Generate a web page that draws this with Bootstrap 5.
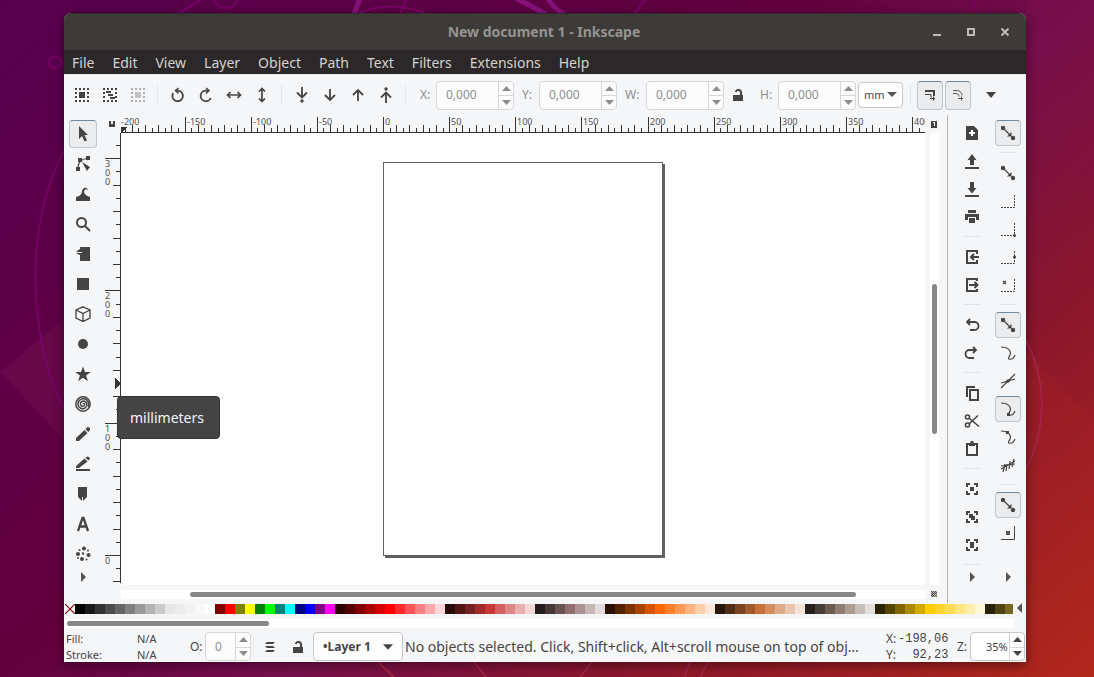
<!DOCTYPE html>
<html lang="en">
<head>
<meta charset="utf-8">
<meta name="viewport" content="width=device-width, initial-scale=1">
<title>New document 1 - Inkscape</title>
<link href="https://cdn.jsdelivr.net/npm/bootstrap@5.3.0/dist/css/bootstrap.min.css" rel="stylesheet">
<style>
:root{--ink:#444;--panel:#f5f6f8;--line:#d5d7da;--dim:#8b8e90}
body{font-family:"Noto Sans",sans-serif;font-size:14px;line-height:20px;color:var(--ink);min-height:100vh;padding:13px 68px 15px 64px;
 background:linear-gradient(140deg,#58004f 0%,#62003e 42%,#750f4b 57%,#8a162c 75%,#b3281a 100%)}
.wallpaper{z-index:-1}
svg{display:block;flex:none}
.app{background:var(--panel);border-radius:7px 7px 0 0;box-shadow:0 3px 12px rgba(0,0,0,.45);min-width:0}
.titlebar{height:37px;background:#3d3b38;border-radius:7px 7px 0 0;border-top:1px solid #2e2c2a;color:#95938f;display:grid;grid-template-columns:112px 1fr 114px}
.titlebar h1{font-size:14px;line-height:20px}
.wm{gap:18px;padding-right:13px}
.wm button,.plain{border:0;background:none;padding:0;color:inherit;display:flex;align-items:center;justify-content:center}
.wm button{width:16px;height:16px;color:#bdbbb6}
.menus{height:24px;background:#2c2829;padding:2px 8px 0;gap:18px}
.menus a{color:#d5d2cd;text-decoration:none}
.tools{height:41px;padding:0 8px 0 4px;border-top:1px solid #e6e7e9}
.ib{width:28px;height:28px}
.vr-soft{width:1px;height:20px;background:#e6e7e9;margin:0 6px 0 5px}
.status .vr-soft{margin:0 2px}
.hr-soft{width:16px;height:1px;background:#e3e4e6;margin:5px 6px 6px}
.pressed{border:1px solid #c3c6ca !important;border-top-color:#76889b !important;background:#ebecee !important;border-radius:4px}
.spin{width:78px;height:29px;border:1px solid var(--line);border-radius:4px;background:#fcfcfc;overflow:hidden}
.spin input{border:0;background:none;min-width:0;flex:1 1 0;padding:0 0 0 9px;font-size:12px;color:var(--dim);outline:0}
.spin .steps{width:15px;border-left:1px solid var(--line)}
.spin .steps button{height:50%;color:var(--dim)}
.spin .steps button+button{border-top:1px solid var(--line)}
.lab{font-size:12px;color:var(--dim)}
.unit{appearance:none;width:45px;height:26px;border:1px solid #c3c6ca;border-radius:4px;font-size:11px;line-height:16px;padding:0 0 0 5px;margin:0 2px;color:var(--ink);
 background:#fff url("data:image/svg+xml,%3Csvg xmlns='http://www.w3.org/2000/svg' width='10' height='6'%3E%3Cpath d='M0 0h10L5 5z' fill='%23555'/%3E%3C/svg%3E") no-repeat right 5px center}
.togg{width:26px;height:29px;margin-right:2px}
.toolbox{width:39px;padding:5px 5px 0;gap:2px}
.toolbox .more{width:28px;height:14px}
.sheetgrid{display:grid;grid-template-columns:18px minmax(0,1fr) 22px;grid-template-rows:18px minmax(452px,1fr) 18px}
.hr-ruler,.vr-ruler{overflow:hidden;position:relative}
.hr-ruler svg{width:100%;height:18px}
.vr-ruler svg{width:18px;height:100%;position:absolute;inset:0}
.sheetgrid text{font-size:9px;fill:#505050}
.canvas{background:#fff}
.paper{width:280px;height:394px;border:1px solid #606060;background:#fff;box-shadow:2px 2px 0 #606060}
.trough{background:#fff}
.vtrough{width:9px;margin-left:5px;padding:151px 2px 0}
.vtrough div{width:5px;height:150px;border-radius:3px;background:#888}
.htrough{height:9px;margin-top:5px;padding:2px 69px}
.htrough div{height:5px;border-radius:3px;background:#888}
.tip{left:53px;top:383px;background:#444;border:1px solid #333;border-radius:4px;color:#f4f4f4;padding:11px 12px;z-index:2;width:103px;height:43px;line-height:20px;white-space:nowrap}
.side{border-left:1px solid #b4b6ad;padding:4px 4px 0 10px;gap:8px}
.side .stack{width:28px;display:flex;flex-direction:column}
.side .ib.pressed{width:26px;height:26px;margin:1px}
.side .more{width:28px;height:12px}
.palette{height:12px;padding:1px 0 1px 1px}
.palette .sw{width:10px;height:10px;flex:none;border:0;padding:0}
.swend{width:13px;height:10px}
.ptrough{height:9px;margin:4px 12px 0 1px;padding:2px}
.ptrough div{width:202px;height:5px;border-radius:3px;background:#888}
.status{height:34px;padding:3px 1px 0 2px}
.status .pair{font-size:11px;line-height:16px;width:124px;display:grid;grid-template-columns:71px 1fr}
.status .spin.o{width:46px;height:29px}
.status .spin.z{width:55px;height:29px;border-color:#c3c6ca;background:#fff}
.spin.z input,.spin.z .steps button{color:var(--ink)}
.spin.z input{font-size:11px;padding-left:15px}
.layerbtn{width:90px;height:29px;border:1px solid #c3c6ca;border-radius:4px;background:#fdfdfd;font-size:12px;font-weight:700;color:var(--ink);padding:0 9px;margin:0 2px 0 1px}
.msg{font-size:14px;min-width:0}
.coords{font-size:12px;line-height:16px;width:62px;display:grid;grid-template-columns:12px 1fr;margin-right:9px}
.coords span:nth-child(even){font-family:"Liberation Mono",monospace;text-align:right}
</style>
</head>
<body class="d-flex flex-column position-relative">
<svg class="wallpaper position-absolute top-0 start-0 w-100 h-100" viewBox="0 0 1094 677" preserveAspectRatio="none" aria-hidden="true" fill="none">
 <path d="M0 372 64 318V440z" fill="#70104d" opacity=".5"/><path d="M1094 0V200L1026 110V0z" fill="#80104a" opacity=".15"/>
 <path d="M1026 350 1094 420V677H1026z" fill="#b02a25" opacity=".2"/>
 <g stroke="#80006f" stroke-width="1.5"><circle cx="55" cy="62" r="6"/><circle cx="226" cy="-5" r="13"/><path d="M178 14 200 0M64 150C26 225 26 330 64 410" /><path d="M358 14C375 5 400 3 427 14M400 14 406 0M634 14 645 0M972 0 977 14"/></g>
 <path d="M354 14 361-4M512-4 546 14M546-6C550 4 556 10 564 14" stroke="#87107a" stroke-width="5"/>
 <path d="M1026 340C1044 375 1050 420 1026 470M378 662 394 677M474 662 486 677M580 677 592 662M684 677 690 662M700 677 708 662" stroke="#a32345" stroke-width="2"/>
</svg>

<svg class="d-none" aria-hidden="true">
 <symbol id="up" viewBox="0 0 9 5"><path d="M0 5h9L4.500 0z" fill="currentColor"/></symbol>
 <symbol id="dn" viewBox="0 0 9 5"><path d="M0 0h9L4.500 5z" fill="currentColor"/></symbol>
 <symbol id="rt" viewBox="-2 0 8 10"><path d="M0 0v10l5-5z" fill="#555"/></symbol>
 <symbol id="lock" viewBox="0 0 16 16"><path d="M3 8h10v6H3z" fill="#444"/><path d="M11 8V5.500a2.700 2.700 0 0 0-5.300-.5" fill="none" stroke="#444" stroke-width="2"/></symbol>
 <symbol id="snapdots" viewBox="0 0 16 16"><circle cx="3" cy="3" r="2.200" fill="#444"/><circle cx="13" cy="13" r="2.200" fill="#444"/><path d="M4 4l6 6" stroke="#444" stroke-width="1.300"/><path d="M11.500 11.500V7L7 11.500z" fill="#444"/></symbol>
 <symbol id="corner" viewBox="0 0 16 16"><path d="M1 14.500h13.500V1" fill="none" stroke="#444" stroke-dasharray="2 1"/></symbol>
 <symbol id="curve" viewBox="0 0 16 16"><path d="M1 2c6 0 11 3 9 8-.8 2-2 3-1.200 4 2.500.8 5-1 6.200-4" fill="none" stroke="#444" stroke-width="1.200"/></symbol>
 <symbol id="fit" viewBox="0 0 16 16"><path d="M3 6V3h3M10 3h3v3M13 10v3h-3M6 13H3v-3" fill="none" stroke="#444" stroke-width="2"/></symbol>
</svg>

<main class="app d-flex flex-column flex-fill position-relative">
 <header class="titlebar align-items-center">
  <span></span><h1 class="m-0 fw-bold text-center">New document 1 - Inkscape</h1>
  <div class="wm d-flex justify-content-end">
   <button aria-label="Minimize"><svg width="16" height="16"><path d="M4 10h8v2H4z" fill="currentColor"/></svg></button>
   <button aria-label="Maximize"><svg width="16" height="16"><path d="M5 5h6v6H5z" fill="none" stroke="currentColor" stroke-width="2"/></svg></button>
   <button aria-label="Close"><svg width="16" height="16"><path d="M4.500 4.500l7 7M11.500 4.500l-7 7" stroke="currentColor" stroke-width="2"/></svg></button>
  </div>
 </header>
 <nav class="menus d-flex align-items-center"><a href="#">File</a><a href="#">Edit</a><a href="#">View</a><a href="#">Layer</a><a href="#">Object</a><a href="#">Path</a><a href="#">Text</a><a href="#">Filters</a><a href="#">Extensions</a><a href="#">Help</a></nav>

 <div class="tools d-flex align-items-center">
  <button class="plain ib" aria-label="Select all"><svg width="16" height="16"><path d="M2 2h12v12H2z" fill="none" stroke="#444" stroke-width="2" stroke-dasharray="2 2" stroke-dashoffset="1"/><path d="M5 5h6v6H5z" fill="#444"/></svg></button>
  <button class="plain ib" aria-label="Select all in all layers"><svg width="16" height="16"><path d="M2 2h12v12H2z" fill="none" stroke="#444" stroke-width="2" stroke-dasharray="2 2" stroke-dashoffset="1"/><path d="M4 4h5v2H4zM6 7h5v2H6zM8 10h5v2H8z" fill="#444"/></svg></button>
  <button class="plain ib" aria-label="Deselect"><svg width="16" height="16" opacity=".4"><path d="M2 2h12v12H2z" fill="none" stroke="#444" stroke-width="2" stroke-dasharray="2 2" stroke-dashoffset="1"/><path d="M5 5h6v6H5z" fill="#777"/></svg></button>
  <span class="vr-soft"></span>
  <button class="plain ib" aria-label="Rotate left"><svg width="16" height="16" fill="none" stroke="#444" stroke-width="1.800"><path d="M3.200 6A5.300 5.300 0 1 0 8 3.600H5.500"/><path d="M8.500 1 5.500 3.600l3 2.800" stroke-width="1.500"/></svg></button>
  <button class="plain ib" aria-label="Rotate right"><svg width="16" height="16" fill="none" stroke="#444" stroke-width="1.800"><path d="M12.800 11A5.300 5.300 0 1 1 8 3.600h3"/><path d="M8 1l3 2.600-3 2.800" stroke-width="1.500"/></svg></button>
  <button class="plain ib" aria-label="Flip horizontally"><svg width="16" height="16" fill="none" stroke="#444" stroke-width="1.700"><path d="M2 8h12M4.500 5l-3 3 3 3M11.500 5l3 3-3 3"/></svg></button>
  <button class="plain ib" aria-label="Flip vertically"><svg width="16" height="16" fill="none" stroke="#444" stroke-width="1.700"><path d="M8 2v12M5 4.500l3-3 3 3M5 11.500l3 3 3-3"/></svg></button>
  <span class="vr-soft"></span>
  <button class="plain ib" aria-label="Lower to bottom"><svg width="16" height="16" fill="none" stroke="#444" stroke-width="1.800"><path d="M8 0v10M3 5.500 8 10.500l5-5"/><circle cx="8" cy="14" r="1.700" fill="#444" stroke="none"/></svg></button>
  <button class="plain ib" aria-label="Lower"><svg width="16" height="16" fill="none" stroke="#444" stroke-width="1.800"><path d="M8 2v11M3 8l5 5 5-5"/></svg></button>
  <button class="plain ib" aria-label="Raise"><svg width="16" height="16" fill="none" stroke="#444" stroke-width="1.800"><path d="M8 14V3M3 8l5-5 5 5"/></svg></button>
  <button class="plain ib" aria-label="Raise to top"><svg width="16" height="16" fill="none" stroke="#444" stroke-width="1.800"><path d="M8 16V6M3 10.500l5-5 5 5"/><circle cx="8" cy="2" r="1.700" fill="#444" stroke="none"/></svg></button>
  <span class="vr-soft"></span>
  <label class="lab ms-2" for="fx" style="width:16px">X:</label>
  <div class="spin d-flex"><input id="fx" value="0,000"><div class="steps"><button class="plain w-100" aria-label="Increase X"><svg width="9" height="5"><use href="#up"/></svg></button><button class="plain w-100" aria-label="Decrease X"><svg width="9" height="5"><use href="#dn"/></svg></button></div></div>
  <label class="lab ms-2" for="fy" style="width:17px">Y:</label>
  <div class="spin d-flex"><input id="fy" value="0,000"><div class="steps"><button class="plain w-100" aria-label="Increase Y"><svg width="9" height="5"><use href="#up"/></svg></button><button class="plain w-100" aria-label="Decrease Y"><svg width="9" height="5"><use href="#dn"/></svg></button></div></div>
  <label class="lab ms-2" for="fw" style="width:21px">W:</label>
  <div class="spin d-flex"><input id="fw" value="0,000"><div class="steps"><button class="plain w-100" aria-label="Increase W"><svg width="9" height="5"><use href="#up"/></svg></button><button class="plain w-100" aria-label="Decrease W"><svg width="9" height="5"><use href="#dn"/></svg></button></div></div>
  <button class="plain ib" aria-label="Lock proportions"><svg width="16" height="16"><use href="#lock"/></svg></button>
  <label class="lab ms-2" for="fh" style="width:18px">H:</label>
  <div class="spin d-flex"><input id="fh" value="0,000"><div class="steps"><button class="plain w-100" aria-label="Increase H"><svg width="9" height="5"><use href="#up"/></svg></button><button class="plain w-100" aria-label="Decrease H"><svg width="9" height="5"><use href="#dn"/></svg></button></div></div>
  <select class="unit" aria-label="Unit"><option>mm</option><option>px</option></select>
  <span class="vr-soft"></span>
  <button class="plain togg pressed" aria-label="Scale stroke width"><svg width="12" height="12" viewBox="0 0 12 12" fill="none" stroke="#444"><path d="M1 2h9v5" stroke-width="2"/><path d="M1 5.500h6v3"/><path d="M6 9.500h5M9.500 7.500v4" stroke-width="1.200"/></svg></button>
  <button class="plain togg pressed" aria-label="Scale rounded corners"><svg width="12" height="12" viewBox="0 0 12 12" fill="none" stroke="#555"><path d="M1 1.500h3c4 0 6 2 6 5"/><path d="M1 4.500h2c3 0 4 1 4 3M6 9.500h5M9.500 7.500v4"/></svg></button>
  <button class="plain ib ms-1" aria-label="More options"><svg width="10" height="6"><path d="M0 0h10L5 6z" fill="#444"/></svg></button>
 </div>

 <div class="d-flex flex-fill">
  <div class="toolbox d-flex flex-column">
   <button class="plain ib pressed" aria-label="Selector"><svg width="16" height="16" fill="#444"><path d="M4 0v13l3-3 2.500 5.500 2.500-1.200L9.500 9H13z"/></svg></button>
   <button class="plain ib" aria-label="Node"><svg width="16" height="16" fill="#444"><path d="M3 12C3 7 6 3 12 2.500" fill="none" stroke="#444" stroke-width="1.200"/><path d="M11 0h4v4h-4zM3 2h4v4H3zM1 11h4v4H1zM7 6l8 5-3 4z"/></svg></button>
   <button class="plain ib" aria-label="Tweak"><svg width="16" height="16" fill="#444"><path d="M1 15v-4l3-1c2-1 3-3 3-5 1-4 5-4 6-1-2-2-4 0-4 2 1 3 3 4 6 5v4z"/></svg></button>
   <button class="plain ib" aria-label="Zoom"><svg width="16" height="16" fill="none" stroke="#444" stroke-width="2"><circle cx="6.500" cy="6.500" r="4.500"/><path d="M10 10l5 5"/></svg></button>
   <button class="plain ib" aria-label="Measure"><svg width="16" height="16" fill="#444"><path d="M5 1h10v14H5V9L1 7.500 5 6.500 1 5.500 5 3z"/><path d="M1 6.500h6" stroke="#f5f6f8"/></svg></button>
   <button class="plain ib" aria-label="Rectangle"><svg width="16" height="16" fill="#444"><path d="M2 2h12v12H2z"/></svg></button>
   <button class="plain ib" aria-label="3D box"><svg width="16" height="16" fill="none" stroke="#444" stroke-width="1.300"><path d="M8 .8 15 4v8l-7 3.500L1 12V4zM1 4l7 3.500L15 4M8 7.500v8"/></svg></button>
   <button class="plain ib" aria-label="Ellipse"><svg width="16" height="16" fill="#444"><circle cx="8" cy="8" r="5"/></svg></button>
   <button class="plain ib" aria-label="Star"><svg width="16" height="16" fill="#444"><path d="M8 .5 10 6h5.800l-4.700 3.500 1.800 5.700L8 11.800l-4.900 3.400 1.800-5.700L.2 6H6z"/></svg></button>
   <button class="plain ib" aria-label="Spiral"><svg width="16" height="16" fill="none" stroke="#444" stroke-width="1.500"><path d="M8 8c1-1 2 0 1.500 1.300C8.700 11 6 10.500 5.500 8.500 5 6 7.500 4.500 9.500 5.200c3 1 3.300 4.800 1 6.500C7.500 14 3.500 12 3 8.500 2.500 5 5.800 2.300 9 2.800c4 .6 5.800 4.800 4.500 8"/><circle cx="8" cy="8" r="7.200"/></svg></button>
   <button class="plain ib" aria-label="Pencil"><svg width="16" height="16" fill="#444"><path d="M1 15v-3l8.500-8 3 3L4 15zM10.500 3.200 12.500 1Q15.500 1 15 4l-1.700 2z"/></svg></button>
   <button class="plain ib" aria-label="Pen"><svg width="16" height="16" fill="#444"><path d="M1 12v-2l8.500-7.500 3 3L4 12zM10.500 1.800 12.500.5Q15.500 1 14.500 3.500l-1.200 1zM1 13h14v2H1z"/></svg></button>
   <button class="plain ib" aria-label="Calligraphy"><svg width="16" height="16" fill="#444"><path d="M3 1h9v10l-4 4v-4H7v4l-4-4z"/></svg></button>
   <button class="plain ib" aria-label="Text"><svg width="16" height="16" fill="none" stroke="#444" stroke-width="2.300"><path d="M3 15 7.500 2h1L13 15M4.500 10.500h7"/></svg></button>
   <button class="plain ib" aria-label="Spray"><svg width="16" height="16" fill="#444"><circle cx="9" cy="2.500" r="2"/><circle cx="3" cy="8" r="2"/><circle cx="13.500" cy="9" r="2"/><circle cx="7" cy="13" r="2"/><circle cx="8" cy="7.500" r="1.200"/><circle cx="4.500" cy="4" r="1"/><circle cx="13" cy="4.500" r="1"/><circle cx="11.500" cy="13.500" r="1"/><circle cx="3" cy="12" r="1"/></svg></button>
   <button class="plain more" aria-label="More tools"><svg width="8" height="10"><use href="#rt"/></svg></button>
  </div>

  <div class="sheetgrid flex-fill">
   <div class="d-flex justify-content-center align-items-center"><svg width="6" height="6"><path d="M0 0h2v3h2V0h2v6H0z" fill="#444"/></svg></div>
   <div class="hr-ruler"><svg id="rulerX" shape-rendering="crispEdges"></svg></div>
   <div class="d-flex justify-content-center align-items-center pe-1"><svg width="6" height="7"><path d="M0 0h6v7H0z" fill="#444"/><path d="M2 1h2v4H3V2H2z" fill="#fff"/></svg></div>
   <div class="vr-ruler"><svg id="rulerY" shape-rendering="crispEdges"></svg></div>
   <div class="canvas d-flex align-items-center justify-content-center"><div class="paper"></div></div>
   <div class="trough vtrough"><div></div></div>
   <div></div>
   <div class="trough htrough"><div></div></div>
   <div class="d-flex justify-content-center align-items-center pe-1"><svg width="6" height="6" shape-rendering="crispEdges"><path d="M0 0h6v6H0z" fill="#bbb"/><path d="M0 0h1v1H0zM2 0h1v1H2zM1 1h1v1H1zM0 2h1v1H0zM2 2h1v1H2z" fill="#703050"/><path d="M4 0h1v1H4zM3 1h1v1H3zM5 1h1v1H5zM4 2h1v1H4z" fill="#254"/><path d="M1 3h1v1H1zM0 4h1v1H0zM2 4h1v1H2zM1 5h1v1H1z" fill="#335"/><path d="M3 3h1v1H3zM5 3h1v1H5zM4 4h1v1H4zM3 5h1v1H3zM5 5h1v1H5z" fill="#762"/></svg></div>
  </div>

  <aside class="side d-flex">
   <div class="stack">
    <button class="plain ib" aria-label="New"><svg width="16" height="16"><path d="M2 1h8l4 4v10H2z" fill="#444"/><path d="M8 5v6M5 8h6" stroke="#fff" stroke-width="2"/></svg></button>
    <button class="plain ib" aria-label="Open"><svg width="16" height="16" fill="#444"><path d="M8 1 3.500 7H6v5h4V7h2.500zM1 14h14v2H1z"/></svg></button>
    <button class="plain ib" aria-label="Save"><svg width="16" height="16" fill="#444"><path d="M8 12.500 3.500 7H6V1h4v6h2.500zM1 14h14v2H1z"/></svg></button>
    <button class="plain ib" aria-label="Print"><svg width="16" height="16" fill="#444"><path d="M4 1h8v3H4zM1 5h14v6h-3V8H4v3H1zM5 9h6v5H5z"/></svg></button>
    <div class="hr-soft"></div>
    <button class="plain ib" aria-label="Import"><svg width="16" height="16" fill="none" stroke="#444" stroke-width="2"><path d="M13 5V2H3v12h10v-3M15 8H8M10 5 7 8l3 3"/></svg></button>
    <button class="plain ib" aria-label="Export"><svg width="16" height="16" fill="none" stroke="#444" stroke-width="2"><path d="M13 4V2H3v12h10v-2M5 8h8M10.500 5l3 3-3 3"/></svg></button>
    <div class="hr-soft"></div>
    <button class="plain ib" aria-label="Undo"><svg width="16" height="16" fill="none" stroke="#444" stroke-width="1.800"><path d="M3 5h7.500a4 4 0 0 1 0 8H6M6 2 3 5l3 3"/></svg></button>
    <button class="plain ib" aria-label="Redo"><svg width="16" height="16" fill="none" stroke="#444" stroke-width="1.800"><path d="M12 5H5.500a4 4 0 0 0 0 8H10M9 2l3 3-3 3"/></svg></button>
    <div class="hr-soft"></div>
    <button class="plain ib" aria-label="Copy"><svg width="16" height="16" fill="none" stroke="#444" stroke-width="2"><path d="M6 5h8v10H6zM3 12V2h8"/></svg></button>
    <button class="plain ib" aria-label="Cut"><svg width="16" height="16" fill="none" stroke="#444" stroke-width="1.600"><circle cx="3.500" cy="4" r="2"/><circle cx="3.500" cy="12" r="2"/><path d="M5 5l10 8.500M5 11l9-8.500"/></svg></button>
    <button class="plain ib" aria-label="Paste"><svg width="16" height="16" fill="none" stroke="#444" stroke-width="2"><path d="M3 3h10v11H3z"/><path d="M5 2h6v3H5zM6.500 0h3v2h-3z" fill="#444" stroke="none"/></svg></button>
    <div class="hr-soft"></div>
    <button class="plain ib" aria-label="Zoom selection"><svg width="16" height="16"><use href="#fit"/><path d="M6 6h4v4H6z" fill="#444"/></svg></button>
    <button class="plain ib" aria-label="Zoom drawing"><svg width="16" height="16"><use href="#fit"/><path d="M5 5h4v2h2v4H7V9H5z" fill="#444"/></svg></button>
    <button class="plain ib" aria-label="Zoom page"><svg width="16" height="16"><use href="#fit"/><path d="M6 5h4v6H6z" fill="#444"/></svg></button>
    <div class="hr-soft"></div>
    <button class="plain more" aria-label="More commands"><svg width="8" height="10"><use href="#rt"/></svg></button>
   </div>
   <div class="stack">
    <button class="plain ib pressed" aria-label="Enable snapping"><svg width="16" height="16"><use href="#snapdots"/></svg></button>
    <div class="hr-soft"></div>
    <button class="plain ib" aria-label="Snap bounding boxes"><svg width="16" height="16"><use href="#snapdots"/></svg></button>
    <button class="plain ib" aria-label="Snap edges"><svg width="16" height="16"><use href="#corner"/></svg></button>
    <button class="plain ib" aria-label="Snap corners"><svg width="16" height="16"><use href="#corner"/><circle cx="14.500" cy="14.500" r="1.500" fill="#444"/></svg></button>
    <button class="plain ib" aria-label="Snap edge midpoints"><svg width="16" height="16"><use href="#corner"/><circle cx="14.500" cy="8" r="1.500" fill="#444"/></svg></button>
    <button class="plain ib" aria-label="Snap box centers"><svg width="16" height="16"><use href="#corner"/><path d="M3 4l3 3M6 4 3 7" stroke="#444" stroke-width="1.300"/></svg></button>
    <div class="hr-soft"></div>
    <button class="plain ib pressed" aria-label="Snap nodes"><svg width="16" height="16"><use href="#snapdots"/></svg></button>
    <button class="plain ib" aria-label="Snap paths"><svg width="16" height="16"><use href="#curve"/></svg></button>
    <button class="plain ib" aria-label="Snap intersections"><svg width="16" height="16" stroke="#444" stroke-width="1.200"><path d="M1 15 15 1M1 10l14-4"/><circle cx="8" cy="8" r="1.700" fill="#444" stroke="none"/></svg></button>
    <button class="plain ib pressed" aria-label="Snap cusp nodes"><svg width="16" height="16"><use href="#curve"/><path d="M7 12h3v3H7z" fill="#444"/></svg></button>
    <button class="plain ib" aria-label="Snap smooth nodes"><svg width="16" height="16"><use href="#curve"/><path d="M6 2h3v3H6z" fill="#444"/></svg></button>
    <button class="plain ib" aria-label="Snap line midpoints"><svg width="16" height="16" stroke="#444" stroke-width="1.200"><path d="M1 12 15 4M1 9l14-2M3 15l2-8M6 14l1-7M9 12l1-8M12 10l2-8"/></svg></button>
    <div class="hr-soft"></div>
    <button class="plain ib pressed" aria-label="Snap others"><svg width="16" height="16"><use href="#snapdots"/></svg></button>
    <button class="plain ib" aria-label="Snap page border"><svg width="16" height="16"><path d="M1 14.500h13.500V1" fill="none" stroke="#444"/><path d="M6 6h4v4H6z" fill="#555"/></svg></button>
    <button class="plain more mt-4" aria-label="More snapping"><svg width="8" height="10"><use href="#rt"/></svg></button>
   </div>
  </aside>
 </div>

 <div class="d-flex">
  <div class="palette d-flex flex-fill overflow-hidden w-0" id="palette">
   <button class="sw bg-white" aria-label="No color"><svg width="10" height="10"><path d="M0 0l10 10M10 0 0 10" stroke="#800000" stroke-width="1.200"/></svg></button>
  </div>
  <button class="plain swend" aria-label="Palette menu"><svg width="6" height="10"><path d="M5 0v10L0 5z" fill="#555"/></svg></button>
 </div>
 <div class="trough ptrough"><div></div></div>

 <footer class="status d-flex align-items-center">
  <div class="pair"><span>Fill:</span><span>N/A</span><span>Stroke:</span><span>N/A</span></div>
  <label class="lab" for="fo" style="width:15px;color:#444">O:</label>
  <div class="spin o d-flex"><input id="fo" value="0"><div class="steps"><button class="plain w-100" aria-label="Increase opacity"><svg width="9" height="5"><use href="#up"/></svg></button><button class="plain w-100" aria-label="Decrease opacity"><svg width="9" height="5"><use href="#dn"/></svg></button></div></div>
  <span class="vr-soft"></span>
  <button class="plain ib" aria-label="Toggle layer visibility"><svg width="16" height="16" fill="#444"><path d="M5 3h8l-2 2H3zM3 7h8l2 2H5zM5 11h8l-2 2H3z"/></svg></button>
  <button class="plain ib" aria-label="Lock layer"><svg width="16" height="16"><use href="#lock"/></svg></button>
  <button class="layerbtn d-flex align-items-center justify-content-between"><span>•Layer 1</span><svg width="10" height="6"><use href="#dn"/></svg></button>
  <div class="msg flex-fill text-nowrap overflow-hidden">No objects selected. Click, Shift+click, Alt+scroll mouse on top of obj…</div>
  <div class="coords"><span>X:</span><span>-198,06</span><span>Y:</span><span>92,23</span></div>
  <label class="lab" for="fz" style="width:13px;color:#444">Z:</label>
  <div class="spin z d-flex"><input id="fz" value="35%"><div class="steps"><button class="plain w-100" aria-label="Zoom in"><svg width="9" height="5"><use href="#up"/></svg></button><button class="plain w-100" aria-label="Zoom out"><svg width="9" height="5"><use href="#dn"/></svg></button></div></div>
 </footer>
 <div class="tip position-absolute" role="tooltip">millimeters</div>
</main>

<script src="https://cdn.jsdelivr.net/npm/bootstrap@5.3.0/dist/js/bootstrap.bundle.min.js"></script>
<script>
const colors = `000000 1a1a1a 333333 4d4d4d 666666 808080 999999 b3b3b3 cccccc e6e6e6 ececec f2f2f2 f9f9f9 ffffff
800000 ff0000 808000 ffff00 008000 00ff00 008080 00ffff 000080 0000ff 800080 ff00ff
2b0000 550000 800000 aa0000 d40000 ff0000 ff2a2a ff5555 ff8080 ffaaaa ffd5d5
280b0b 501616 782121 a02c2c c83737 d35f5f de8787 e9afaf f4d7d7
241c1c 483737 6c5353 916f6f ac9393 c8b7b7 e3dbdb
2b1100 552200 803300 aa4400 d45500 ff6600 ff7f2a ff9955 ffb380 ffccaa ffe6d5
28170b 502d16 784421 a05a2c c87137 d38d5f deaa87 e9c6af f4e3d7
241f1c 483e37 6c5d53 917c6f ac9d93 c8beb7 e3dedb
2b2200 554400 806600 aa8800 d4aa00 ffcc00 ffd42a ffdd55 ffe680 ffeeaa fff6d5
28220b 504416 786721`.split(/\s+/);
const palette = document.getElementById('palette');
for (const c of colors) {
  const b = document.createElement('button');
  b.className = 'sw'; b.style.background = '#' + c; b.setAttribute('aria-label', '#' + c);
  palette.append(b);
}
// Pixels per millimetre at the current zoom, and the origin of each ruler
const scale = 1.3228;
function drawRulers() {
  const rx = document.getElementById('rulerX'), ry = document.getElementById('rulerY');
  const w = rx.parentNode.clientWidth, h = ry.parentNode.clientHeight;
  const x0 = (w - 279) / 2, y0 = Math.round((h + 394) / 2) - 1;
  let s = `<rect x="0" y="17" width="${w}" height="1" fill="#333"/><path d="M0 12h6L0 18z" fill="#333"/>`;
  for (let u = -1000; u <= 1000; u += 5) {
    const x = Math.floor(x0 + u * scale);
    if (x < -30 || x > w) continue;
    const len = u % 50 === 0 ? 15 : u % 10 === 0 ? 7 : 4;
    s += `<rect x="${x}" y="${17 - len}" width="1" height="${len}" fill="#333"/>`;
    if (u % 50 === 0) s += `<text x="${Math.max(x + 2, 0)}" y="10">${u}</text>`;
  }
  rx.innerHTML = s;
  s = `<rect x="17" y="0" width="1" height="${h - 2}" fill="#333"/><path d="M12 ${h / 2 + 19}v11l6-5z" fill="#333"/>`;
  for (let u = -1000; u <= 1000; u += 10) {
    const y = Math.round(y0 - u * scale);
    if (y < -40 || y > h - 2) continue;
    const len = u % 100 === 0 ? 15 : u % 20 === 0 ? 7 : 4;
    s += `<rect x="${17 - len}" y="${y}" width="${len}" height="1" fill="#333"/>`;
    if (u % 100 === 0) [...String(u)].forEach((d, i) => s += `<text x="2" y="${y + 9 + 9 * i}">${d}</text>`);
  }
  ry.innerHTML = s;
}
drawRulers();
addEventListener('resize', drawRulers);
</script>
</body>
</html>
